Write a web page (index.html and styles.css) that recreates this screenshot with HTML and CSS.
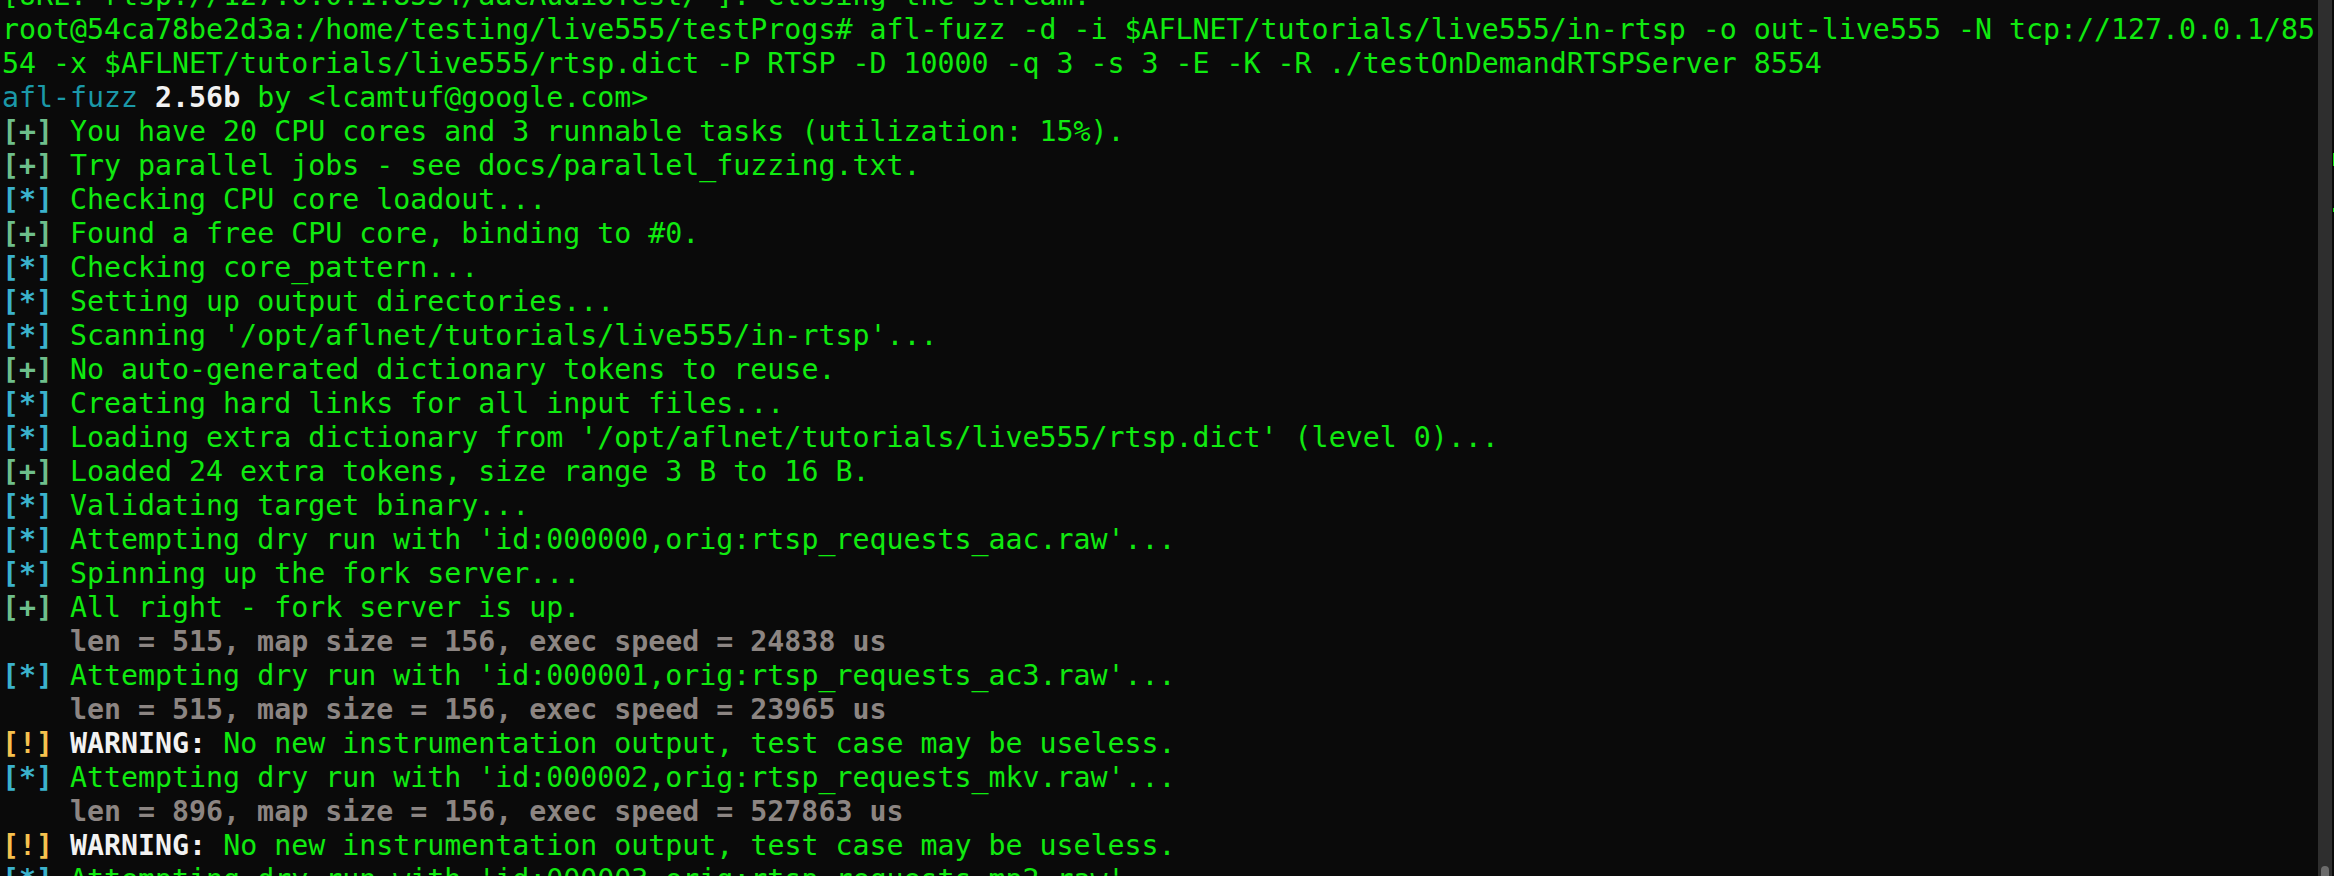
FILE: index.html
```html
<!DOCTYPE html>
<html lang="en">
<head>
<meta charset="utf-8">
<title>afl-fuzz terminal</title>
<link rel="stylesheet" href="styles.css">
</head>
<body>
<div class="window">
  <div class="term">
    <div class="row">[URL:"rtsp://127.0.0.1:8554/aacAudioTest/"]: Closing the stream.</div>
    <div class="row">root@54ca78be2d3a:/home/testing/live555/testProgs# afl-fuzz -d -i $AFLNET/tutorials/live555/in-rtsp -o out-live555 -N tcp://127.0.0.1/85</div>
    <div class="row">54 -x $AFLNET/tutorials/live555/rtsp.dict -P RTSP -D 10000 -q 3 -s 3 -E -K -R ./testOnDemandRTSPServer 8554</div>
    <div class="row"><span class="teal">afl-fuzz</span> <b class="white">2.56b</b> by &lt;lcamtuf@google.com&gt;</div>
    <div class="row"><span class="ok">[+]</span> You have 20 CPU cores and 3 runnable tasks (utilization: 15%).</div>
    <div class="row"><span class="ok">[+]</span> Try parallel jobs - see docs/parallel_fuzzing.txt.</div>
    <div class="row"><span class="act">[*]</span> Checking CPU core loadout...</div>
    <div class="row"><span class="ok">[+]</span> Found a free CPU core, binding to #0.</div>
    <div class="row"><span class="act">[*]</span> Checking core_pattern...</div>
    <div class="row"><span class="act">[*]</span> Setting up output directories...</div>
    <div class="row"><span class="act">[*]</span> Scanning '/opt/aflnet/tutorials/live555/in-rtsp'...</div>
    <div class="row"><span class="ok">[+]</span> No auto-generated dictionary tokens to reuse.</div>
    <div class="row"><span class="act">[*]</span> Creating hard links for all input files...</div>
    <div class="row"><span class="act">[*]</span> Loading extra dictionary from '/opt/aflnet/tutorials/live555/rtsp.dict' (level 0)...</div>
    <div class="row"><span class="ok">[+]</span> Loaded 24 extra tokens, size range 3 B to 16 B.</div>
    <div class="row"><span class="act">[*]</span> Validating target binary...</div>
    <div class="row"><span class="act">[*]</span> Attempting dry run with 'id:000000,orig:rtsp_requests_aac.raw'...</div>
    <div class="row"><span class="act">[*]</span> Spinning up the fork server...</div>
    <div class="row"><span class="ok">[+]</span> All right - fork server is up.</div>
    <div class="row"><b class="gray">    len = 515, map size = 156, exec speed = 24838 us</b></div>
    <div class="row"><span class="act">[*]</span> Attempting dry run with 'id:000001,orig:rtsp_requests_ac3.raw'...</div>
    <div class="row"><b class="gray">    len = 515, map size = 156, exec speed = 23965 us</b></div>
    <div class="row"><span class="warn">[!]</span> <b class="white">WARNING:</b> No new instrumentation output, test case may be useless.</div>
    <div class="row"><span class="act">[*]</span> Attempting dry run with 'id:000002,orig:rtsp_requests_mkv.raw'...</div>
    <div class="row"><b class="gray">    len = 896, map size = 156, exec speed = 527863 us</b></div>
    <div class="row"><span class="warn">[!]</span> <b class="white">WARNING:</b> No new instrumentation output, test case may be useless.</div>
    <div class="row"><span class="act">[*]</span> Attempting dry run with 'id:000003,orig:rtsp_requests_mp2.raw'...</div>
  </div>
  <div class="scrollbar">
    <span class="mark mark-a"></span>
    <span class="mark mark-b"></span>
    <div class="thumb"></div>
  </div>
</div>
</body>
</html>
```

FILE: styles.css
```css
html, body {
  margin: 0;
  padding: 0;
  background: #0a0a0a;
  height: 100%;
  overflow: hidden;
}

.window {
  display: flex;
  width: 2334px;
  height: 876px;
  overflow: hidden;
  background: #0a0a0a;
}

.term {
  flex: 1;
  overflow: hidden;
  margin-top: -21px;
  padding-left: 2px;
  font-family: "DejaVu Sans Mono", "Liberation Mono", monospace;
  font-size: 28.25px;
  line-height: 34px;
  color: #10ea10;
}

.row {
  white-space: pre;
  height: 34px;
}

b {
  font-weight: bold;
}

.teal { color: #1b98a8; }
.white { color: #f2f2f2; }
.ok { color: #6ebf8b; font-weight: bold; }
.act { color: #3bb2cc; font-weight: bold; }
.warn { color: #f6c24e; font-weight: bold; }
.gray { color: #8c8582; }

.scrollbar {
  position: relative;
  width: 14px;
  flex: none;
  margin-right: 2px;
  background: #2e2e2e;
  display: flex;
  flex-direction: column;
  justify-content: flex-end;
  align-items: center;
}

.thumb {
  width: 8px;
  height: 10px;
  border-radius: 4px 4px 0 0;
  background: #6b6b6b;
}

.mark {
  position: absolute;
  right: -2px;
  width: 1px;
  background: #10ea10;
}

.mark-a { top: 153px; height: 13px; }
.mark-b { top: 208px; height: 4px; }
```
